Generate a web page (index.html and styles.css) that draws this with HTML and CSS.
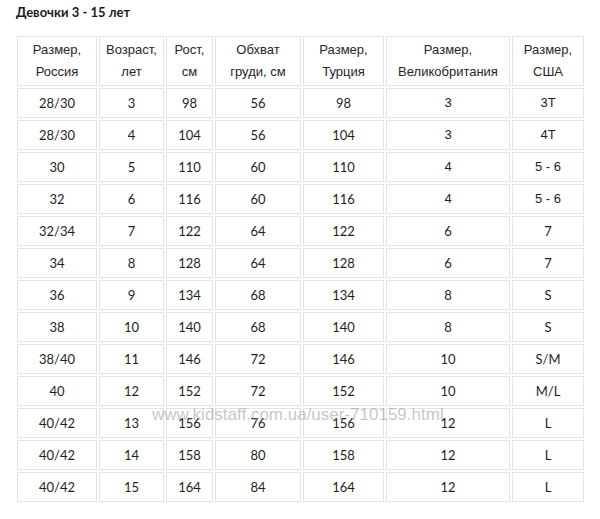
FILE: index.html
```html
<!DOCTYPE html>
<html lang="ru">
<head>
<meta charset="utf-8">
<link rel="stylesheet" href="styles.css">
</head>
<body>
<div class="page">
  <h1 class="title">Девочки 3 - 15 лет</h1>
  <div class="table-wrap">
    <table class="sizes">
      <colgroup>
        <col class="c1"><col class="c2"><col class="c3"><col class="c4"><col class="c5"><col class="c6"><col class="c7">
      </colgroup>
      <thead>
        <tr class="head">
          <th>Размер,<br>Россия</th>
          <th>Возраст,<br>лет</th>
          <th>Рост,<br>см</th>
          <th>Обхват<br>груди, см</th>
          <th>Размер,<br>Турция</th>
          <th>Размер,<br>Великобритания</th>
          <th>Размер,<br>США</th>
        </tr>
      </thead>
      <tbody>
        <tr><td>28/30</td><td>3</td><td>98</td><td>56</td><td>98</td><td class="alt">3</td><td class="alt">3T</td></tr>
        <tr><td>28/30</td><td>4</td><td>104</td><td>56</td><td>104</td><td class="alt">3</td><td class="alt">4T</td></tr>
        <tr><td>30</td><td>5</td><td>110</td><td>60</td><td>110</td><td class="alt">4</td><td class="alt">5 - 6</td></tr>
        <tr><td>32</td><td>6</td><td>116</td><td>60</td><td>116</td><td class="alt">4</td><td class="alt">5 - 6</td></tr>
        <tr><td>32/34</td><td>7</td><td>122</td><td>64</td><td>122</td><td>6</td><td>7</td></tr>
        <tr><td>34</td><td>8</td><td>128</td><td>64</td><td>128</td><td>6</td><td>7</td></tr>
        <tr><td>36</td><td>9</td><td>134</td><td>68</td><td>134</td><td>8</td><td>S</td></tr>
        <tr><td>38</td><td>10</td><td>140</td><td>68</td><td>140</td><td>8</td><td>S</td></tr>
        <tr><td>38/40</td><td>11</td><td>146</td><td>72</td><td>146</td><td>10</td><td>S/M</td></tr>
        <tr><td>40</td><td>12</td><td>152</td><td>72</td><td>152</td><td>10</td><td>M/L</td></tr>
        <tr><td>40/42</td><td>13</td><td>156</td><td>76</td><td>156</td><td>12</td><td>L</td></tr>
        <tr><td>40/42</td><td>14</td><td>158</td><td>80</td><td>158</td><td>12</td><td>L</td></tr>
        <tr><td>40/42</td><td>15</td><td>164</td><td>84</td><td>164</td><td>12</td><td>L</td></tr>
      </tbody>
    </table>
    <div class="watermark">www.kidstaff.com.ua/user-710159.html</div>
  </div>
</div>
</body>
</html>
```
FILE: styles.css
```css
html, body {
  margin: 0;
  padding: 0;
  background: #ffffff;
}

.page {
  padding: 4px 0 0 15px;
}

.title {
  margin: 0 0 0 1px;
  font-family: "Lato", "Liberation Sans", sans-serif;
  font-weight: 700;
  font-size: 13px;
  line-height: 16px;
  color: #1a1a1a;
}

.table-wrap {
  position: relative;
  margin-top: 14px;
  width: 571px;
}

.sizes {
  border-collapse: separate;
  border-spacing: 2px;
  table-layout: fixed;
  width: 571px;
  color: #1e1e1e;
}

.c1 { width: 80px; }
.c2 { width: 65px; }
.c3 { width: 47px; }
.c4 { width: 86px; }
.c5 { width: 81px; }
.c6 { width: 124px; }
.c7 { width: 72px; }

.sizes th,
.sizes td {
  border: 1px solid #e3e3e3;
  padding: 0;
  text-align: center;
  vertical-align: middle;
}

.sizes th {
  font-family: "Liberation Sans", Arial, sans-serif;
  font-weight: 400;
  font-size: 13px;
  line-height: 22px;
  color: #262626;
}

.head {
  height: 50px;
}

.sizes tbody tr {
  height: 30px;
}

.sizes td {
  font-family: "Lato", "Liberation Sans", sans-serif;
  font-size: 13px;
  line-height: 16px;
}

.sizes td.alt {
  font-family: "Liberation Sans", Arial, sans-serif;
}

.watermark {
  position: absolute;
  left: 137px;
  top: 371px;
  font-family: "Liberation Sans", Arial, sans-serif;
  font-size: 17px;
  line-height: 19px;
  color: rgba(150, 150, 150, 0.55);
  white-space: nowrap;
  pointer-events: none;
}
```
